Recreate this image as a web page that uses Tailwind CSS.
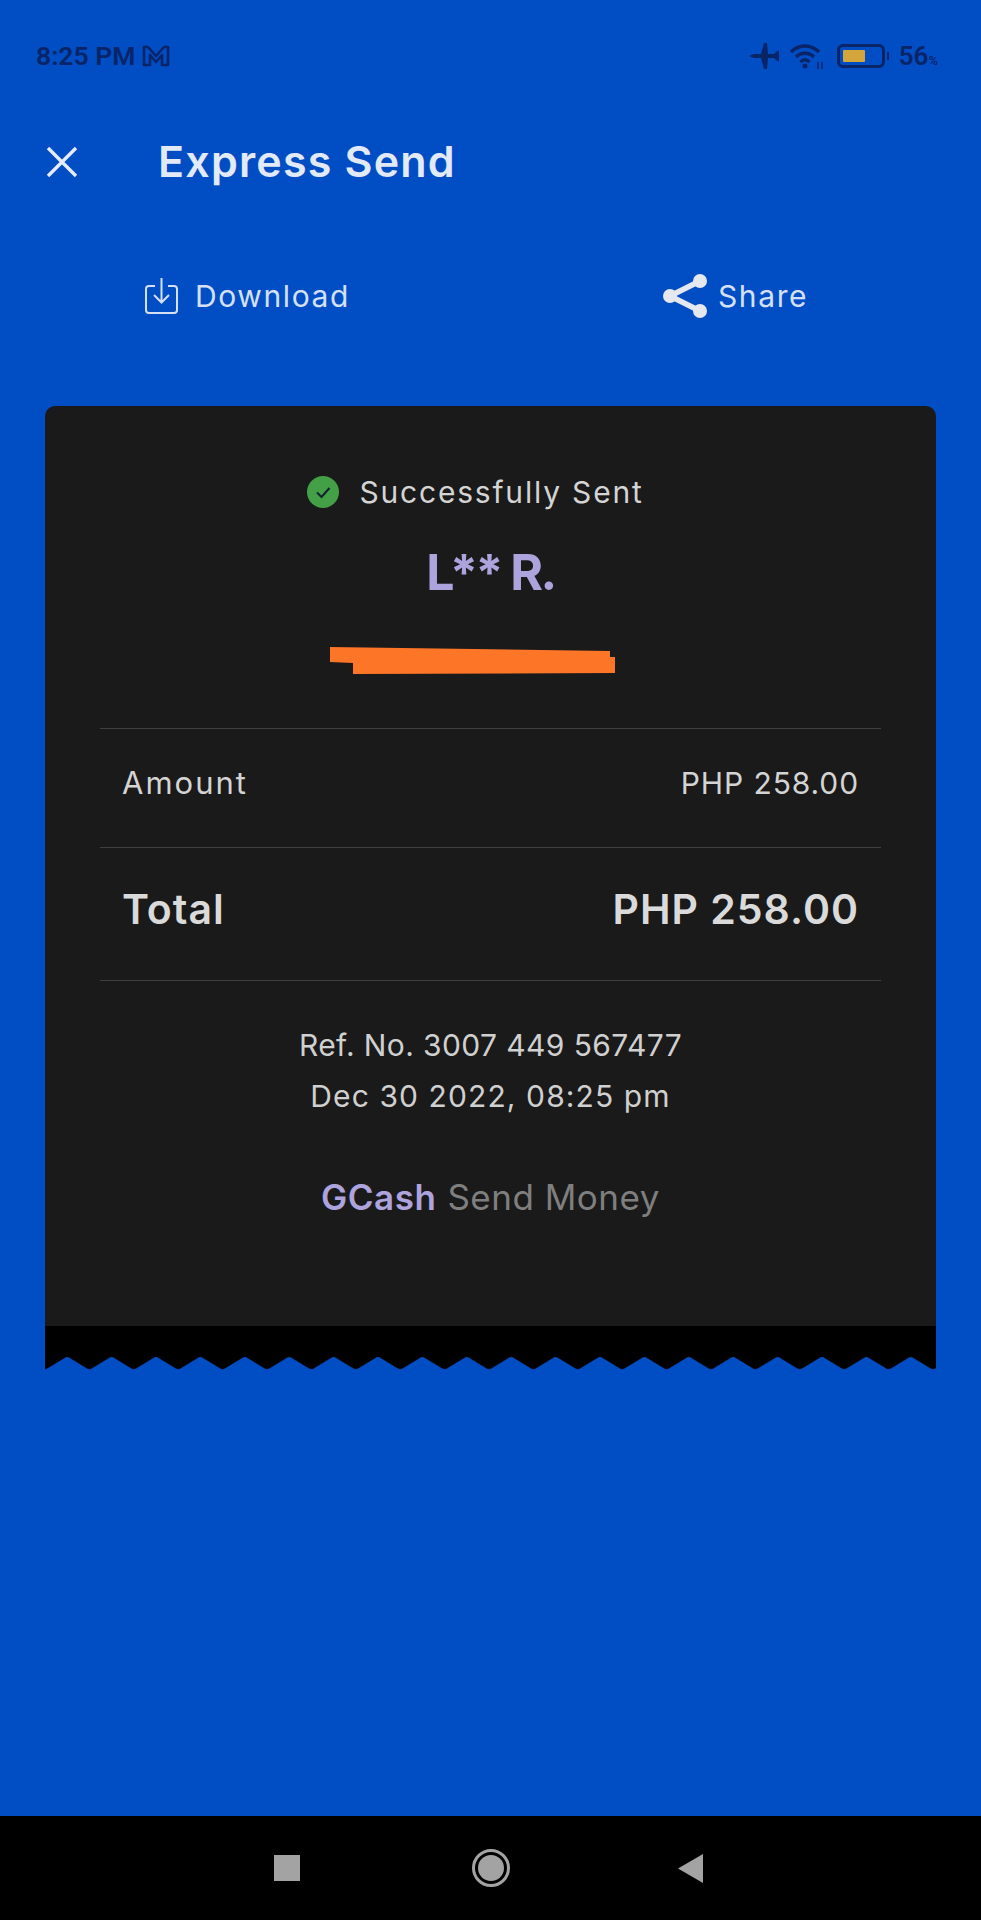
<!DOCTYPE html>
<html>
<head>
<meta charset="utf-8">
<script src="https://cdn.jsdelivr.net/npm/@tailwindcss/browser@4"></script>
</head>
<body class="m-0">
<div class="w-[981px] h-[1920px] bg-[#014dc4] flex flex-col overflow-hidden font-['Inter',sans-serif]">
  <!-- status bar -->
  <div class="h-[112px] shrink-0 flex items-center justify-between pl-[36px] pr-[43px] text-[#0a2468]">
    <div class="flex items-center gap-[7px]">
      <span class="font-['Roboto',sans-serif] font-semibold text-[26.500px] leading-none">8:25 PM</span>
      <svg width="28" height="22" viewBox="0 0 28 22" fill="none" stroke="#0a2468" stroke-width="2.600" stroke-linejoin="round"><path d="M2 20V2h4l8 9 8-9h4v18h-6V10l-6 7-6-7v10z"/></svg>
    </div>
    <div class="flex items-center">
      <svg width="30" height="26" viewBox="0 0 30 26" fill="#0a2468"><path d="M0 13l5-2h7L15 0h3l1 11h6l3-3h2v10h-2l-3-3h-6l-1 11h-3l-3-11H5z"/></svg>
      <svg width="34" height="26" viewBox="0 0 34 26" fill="none" stroke="#0a2468" stroke-width="3.400" class="ml-[11px]"><path d="M1 9c8-8 20-8 28 0M6 14c5-5 13-5 18 0M10.500 19c3-3 6-3 9 0"/><circle cx="15" cy="23" r="2.500" fill="#0a2468" stroke="none"/><path d="M28 19v7M32 19v7" stroke-width="1.500"/></svg>
      <div class="flex items-center ml-[13px]">
        <div class="w-[48px] h-[24px] rounded-[6px] border-[3px] border-[#0a2468] p-[3px] flex"><div class="w-[22px] h-full bg-[#d3a63c] rounded-[1px]"></div></div>
        <div class="w-[2px] h-[8px] bg-[#0a2468] ml-[2px]"></div>
      </div>
      <span class="font-['Roboto',sans-serif] font-semibold text-[26px] leading-none ml-[10px]">56<span class="text-[13px]">%</span></span>
    </div>
  </div>
  <!-- header -->
  <div class="h-[101px] shrink-0 flex items-center pl-[46px] pb-[2px]">
    <svg width="32" height="32" viewBox="0 0 32 32" fill="none" stroke="#e6ecf8" stroke-width="3.400"><path d="M2 2l28 28M30 2L2 30"/></svg>
    <span class="ml-[80px] font-semibold text-[#e2e9f7] text-[43px] leading-none tracking-[1.200px]">Express Send</span>
  </div>
  <!-- actions -->
  <div class="h-[84px] mt-[41px] shrink-0 flex items-center text-[#d6e0f4] text-[30px] tracking-[1.600px] leading-none">
    <div class="pl-[145px] w-[662px] flex items-center gap-[17px]">
      <svg width="33" height="38" viewBox="0 0 33 38" fill="none" stroke="#d6e0f4" stroke-width="2"><path d="M10 9H4a3 3 0 0 0-3 3v21a3 3 0 0 0 3 3h25a3 3 0 0 0 3-3V12a3 3 0 0 0-3-3h-6M16.500 1v24M9 18l7.500 7.500L24 18"/></svg>
      <span>Download</span>
    </div>
    <div class="flex items-center gap-[10px]">
      <svg width="46" height="46" viewBox="0 0 46 46" fill="#e6e8f0"><circle cx="38" cy="8" r="7"/><circle cx="8" cy="23" r="7"/><circle cx="38" cy="38" r="7"/><path d="M38 8L8 23l30 15" fill="none" stroke="#e6e8f0" stroke-width="5.500"/></svg>
      <span>Share</span>
    </div>
  </div>
  <!-- receipt -->
  <div class="mt-[68px] mx-[45px] shrink-0 w-[891px]">
    <div class="h-[920px] bg-[#1a1a1a] rounded-t-[10px] flex flex-col items-center">
      <div class="mt-[68px] h-[36px] flex items-center gap-[20px] -ml-[30px]">
        <svg width="32" height="32" viewBox="0 0 32 32"><circle cx="16" cy="16" r="16" fill="#43a047"/><path d="M10 16.500l4.500 4.500 8-9" fill="none" stroke="#123" stroke-width="2"/></svg>
        <span class="text-[#d4d4d4] text-[30px] leading-none tracking-[1.800px]">Successfully Sent</span>
      </div>
      <div class="mt-[37px] text-[#ada3dd] font-bold text-[50px] leading-none tracking-[-2.500px]">L** R.</div>
      <svg class="mt-[50px] -ml-[36px] block" width="285" height="27" viewBox="0 0 285 27"><path d="M0 0L280 4V10H285V26L23 27V16L0 15Z" fill="#fd7527"/></svg>
      <div class="mt-[54px] w-[781px] border-t border-[#3f3f3f]"></div>
      <div class="w-[781px] h-[119px] border-b border-[#3f3f3f] px-[22px] pb-[11px] flex items-center justify-between text-[#d4d4d4] leading-none">
        <span class="text-[31px] tracking-[2px]">Amount</span><span class="text-[30px] tracking-[0.900px]">PHP 258.00</span>
      </div>
      <div class="w-[781px] h-[133px] border-b border-[#3f3f3f] px-[22px] pb-[10px] flex items-center justify-between text-[#dadada] font-semibold text-[41px] tracking-[1px] leading-none">
        <span>Total</span><span>PHP 258.00</span>
      </div>
      <div class="mt-[39px] text-center text-[#d0d0d0] text-[30px] leading-[51px]">
        <div class="tracking-[0.400px]">Ref. No. 3007 449 567477</div>
        <div class="tracking-[1.100px]">Dec 30 2022, 08:25 pm</div>
      </div>
      <div class="mt-[58px] flex items-center gap-[11px] text-[35px] tracking-[0.500px] leading-none">
        <span class="font-semibold text-[#ada3dd]">GCash</span><span class="text-[#7f7f7f]">Send Money</span>
      </div>
    </div>
    <div class="h-[30px] bg-black"></div>
    <svg class="block" width="891" height="14" viewBox="0 0 891 14">
      <defs><pattern id="zig" x="-22.200" width="44.400" height="14" patternUnits="userSpaceOnUse"><path d="M0 0H44.400V1Q42.900 1 41.400 2.200L24.500 12.600Q22.200 14 19.900 12.600L3 2.200Q1.500 1 0 1Z" fill="#000"/></pattern></defs>
      <rect width="891" height="14" fill="url(#zig)"/>
    </svg>
  </div>
  <div class="flex-1"></div>
  <!-- nav -->
  <div class="h-[104px] shrink-0 bg-black flex items-center">
    <div class="ml-[274px] w-[26px] h-[26px] bg-[#a3a3a3]"></div>
    <div class="ml-[172px] w-[38px] h-[38px] rounded-full border-[3px] border-[#a3a3a3] p-[3px]"><div class="w-full h-full rounded-full bg-[#a3a3a3]"></div></div>
    <svg class="ml-[168px]" width="25" height="29" viewBox="0 0 25 29"><path d="M0 14.500L25 0V29Z" fill="#a3a3a3"/></svg>
  </div>
</div>
</body>
</html>
